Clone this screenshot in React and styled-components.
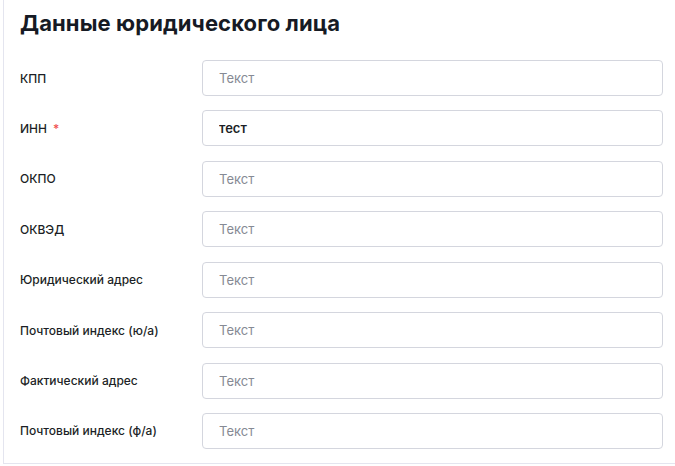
import React from 'react';
import styled, { createGlobalStyle } from 'styled-components';

const GlobalStyle = createGlobalStyle`
	html, body {
		margin: 0;
		padding: 0;
		background: #ffffff;
		overflow: hidden;
	}
	body {
		font-family: Inter, "Noto Sans", sans-serif;
		color: #1c1f26;
	}
`

const Card = styled.section`
	width: 700px;
	margin-left: 3px;
	padding: 8px 0 14px 16px;
	box-sizing: border-box;
	border-left: 1px solid #e4e5ef;
	border-bottom: 1px solid #e4e5ef;
	background: #fff;
`

const Title = styled.h2`
	margin: 0 0 22px;
	font-size: 22px;
	line-height: 30px;
	font-weight: 700;
	color: #161a24;
	letter-spacing: 0.1px;
`

const Form = styled.div`
	display: grid;
	grid-template-columns: 182px 461px;
	row-gap: 14.43px;
`

const Label = styled.label`
	display: flex;
	align-items: center;
	font-size: 12px;
	font-weight: 500;
	color: #1c1f26;
	gap: 6px;
`

const Required = styled.span`
	color: #f0504f;
	font-size: 12px;
`

const Input = styled.input`
	height: 36px;
	box-sizing: border-box;
	width: 100%;
	border: 1px solid #d4d6de;
	border-radius: 4px;
	padding: 0 16px;
	font-family: inherit;
	font-size: 13px;
	font-weight: ${p => (p.$filled ? 600 : 400)};
	color: #1c1f26;
	outline: none;
	&::placeholder {
		color: #868a94;
	}
`

const fields = [
	{ label: 'КПП' },
	{ label: 'ИНН', required: true, value: 'тест' },
	{ label: 'ОКПО' },
	{ label: 'ОКВЭД' },
	{ label: 'Юридический адрес' },
	{ label: 'Почтовый индекс (ю/а)' },
	{ label: 'Фактический адрес' },
	{ label: 'Почтовый индекс (ф/а)' },
]

const App = () => {
	return (
		<>
			<GlobalStyle />
			<Card>
				<Title>Данные юридического лица</Title>
				<Form>
					{fields.map(f => (
						<React.Fragment key={f.label}>
							<Label>
								{f.label}
								{f.required && <Required>*</Required>}
							</Label>
							<Input
								placeholder="Текст"
								defaultValue={f.value}
								$filled={!!f.value}
							/>
						</React.Fragment>
					))}
				</Form>
			</Card>
		</>
	)
}

export default App;
